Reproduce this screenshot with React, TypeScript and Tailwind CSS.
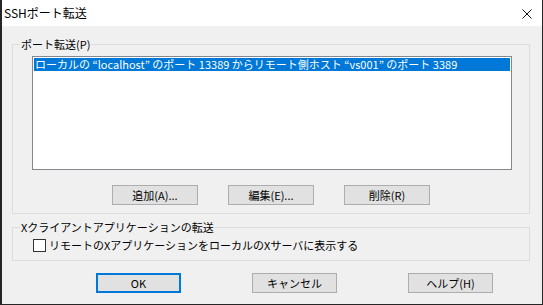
import React from 'react';

const ui = "font-['Noto_Sans_CJK_JP','Noto_Sans',sans-serif] text-black";

function DlgButton({ label, isDefault }: { label: string; isDefault?: boolean }) {
    return (
        <button
            className={
                isDefault
                    ? 'w-[85px] h-[20px] bg-[#e1e1e1] border-2 border-[#0078d7] leading-[16px] text-[11px]'
                    : 'w-[85px] h-[20px] bg-[#e1e1e1] border border-[#adadad] leading-[18px] text-[11px]'
            }
        >
            {label}
        </button>
    );
}

export default function App() {
    return (
        <div className={`w-[543px] h-[305px] flex flex-col border-l-2 border-r border-b border-[#262626] overflow-hidden ${ui}`}>
            {/* title bar */}
            <div className="h-[26px] bg-white flex items-center justify-between pl-[2px] pr-[10px] shrink-0 text-[12px]">
                <span className="leading-[16px]">SSHポート転送</span>
                <svg width="10" height="10" viewBox="0 0 10 10" className="mt-[1px]">
                    <path d="M0.5 0.5 L9.5 9.5 M9.5 0.5 L0.5 9.5" stroke="#111" strokeWidth="1" fill="none" />
                </svg>
            </div>

            <div className="flex-1 bg-[#f0f0f0] flex flex-col pt-[10px] text-[11px]">
                {/* port forwarding group */}
                <fieldset className="ml-[10px] w-[518px] border border-[#dcdcdc] pb-[8px]">
                    <legend className="ml-[7px] px-[1px] h-[16px] leading-[16px]">ポート転送(P)</legend>
                    <div className="mt-[4px] ml-[19px] w-[480px] h-[114px] border border-[#828790] bg-white p-[1px]">
                        <div className="h-[13px] bg-[#0078d7] text-white leading-[13px] pl-[1px] whitespace-nowrap">
                            ローカルの “localhost” のポート 13389 からリモート側ホスト “vs001” のポート 3389
                        </div>
                    </div>
                    <div className="mt-[15px] ml-[99px] flex gap-[30px]">
                        <button className="w-[86px] h-[20px] bg-[#e1e1e1] border border-[#adadad] leading-[18px]">追加(A)...</button>
                        <button className="w-[86px] h-[20px] bg-[#e1e1e1] border border-[#adadad] leading-[18px]">編集(E)...</button>
                        <button className="w-[86px] h-[20px] bg-[#e1e1e1] border border-[#adadad] leading-[18px]">削除(R)</button>
                    </div>
                </fieldset>

                {/* X11 forwarding group */}
                <fieldset className="mt-[5px] ml-[10px] w-[518px] border border-[#dcdcdc] pb-[8px]">
                    <legend className="ml-[7px] px-[1px] h-[16px] leading-[16px]">Xクライアントアプリケーションの転送</legend>
                    <label className="mt-[4px] ml-[20px] flex items-center gap-[3px] h-[13px] w-fit">
                        <span className="w-[13px] h-[13px] border border-[#333] bg-white shrink-0" />
                        <span className="leading-[13px] whitespace-nowrap">リモートのXアプリケーションをローカルのXサーバに表示する</span>
                    </label>
                </fieldset>

                <div className="mt-[12px] ml-[94px] flex gap-[71px]">
                    <DlgButton label="OK" isDefault />
                    <DlgButton label="キャンセル" />
                    <DlgButton label="ヘルプ(H)" />
                </div>
            </div>
        </div>
    );
}
